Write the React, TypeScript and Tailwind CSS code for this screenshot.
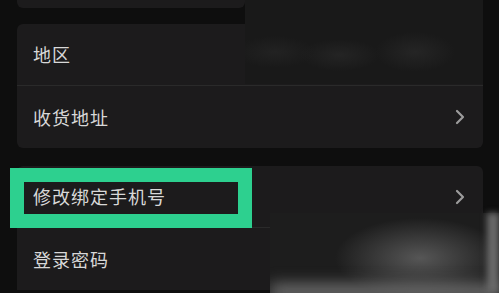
import { ChevronRight } from 'lucide-react'

const font = { fontFamily: '"Noto Sans CJK SC", "Noto Sans", sans-serif' }

function Row({ label, arrow, divider }: { label: string; arrow?: boolean; divider?: boolean }) {
  return (
    <div
      className={`flex h-[62px] items-center justify-between pl-[16px] pr-[11px] ${
        divider ? 'border-b border-[#2a2a2a]' : ''
      }`}
    >
      <span className="text-[18px] tracking-[1px] text-[#d8d8d8]">{label}</span>
      {arrow && <ChevronRight className="h-[24px] w-[24px] text-[#9c9c9c]" strokeWidth={2.2} />}
    </div>
  )
}

export default function App() {
  return (
    <div className="relative h-[293px] w-[499px] overflow-hidden bg-[#0e0e0e]" style={font}>
      <div className="flex flex-col pl-[17px] pr-[16px]">
        <div className="h-[8px] w-[228px] rounded-b-md bg-[#1c1b1c]" />
        <div className="mt-[16px] rounded-md bg-[#1c1b1c]">
          <Row label="地区" divider />
          <Row label="收货地址" arrow />
        </div>
        <div className="mt-[18px] rounded-t-md bg-[#1c1b1c]">
          <Row label="修改绑定手机号" arrow divider />
          <Row label="登录密码" />
        </div>
      </div>

      {/* mosaic over the region value */}
      <div className="absolute left-[245px] top-0 h-[84px] w-[238px] bg-[#191919] bg-[radial-gradient(ellipse_40px_16px_at_30px_52px,#222222,transparent),radial-gradient(ellipse_40px_16px_at_95px_55px,#242424,transparent),radial-gradient(ellipse_40px_20px_at_170px_52px,#252525,transparent)]" />

      {/* highlight box */}
      <div className="absolute left-[10px] top-[168px] h-[60px] w-[242px] border-[14px] border-[#2dd08f]" />

      {/* watermark */}
      <div className="absolute left-[270px] top-[213px] flex h-[80px] w-[229px] flex-col justify-end overflow-hidden bg-[#1d1d1d] bg-[radial-gradient(ellipse_85px_40px_at_150px_45px,#565656,#1d1d1d)]">
        <div className="mb-[-6px] h-[14px] w-full bg-[#7a7a7a] blur-sm" />
      </div>
      <div className="absolute right-0 top-[213px] h-[80px] w-[12px] bg-[#6a6a6a] blur-[3px]" />
    </div>
  )
}
